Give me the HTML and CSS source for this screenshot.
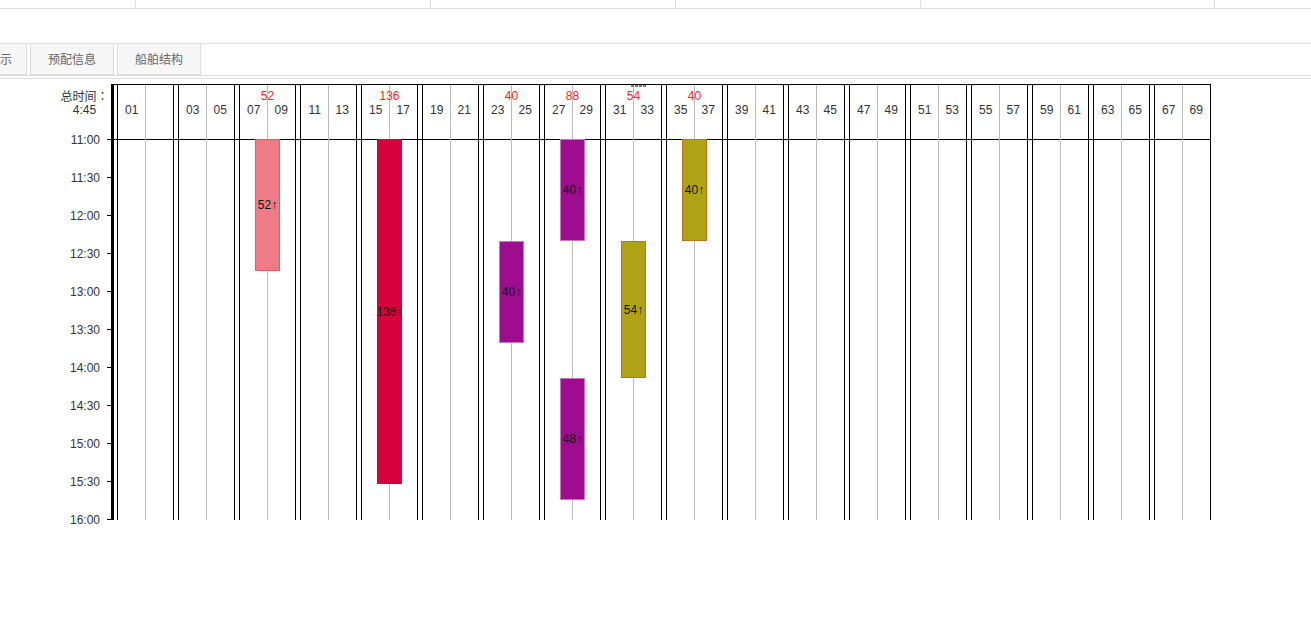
FILE: index.html
```
<!DOCTYPE html>
<html lang="zh-CN">
<head>
<meta charset="utf-8">
<title>船舶作业计划</title>
<link rel="stylesheet" href="styles.css">
</head>
<body>
<div class="table-foot"><span></span><span></span><span></span><span></span><span></span><span></span></div>
<nav class="tabs">
<button class="tab tab-cut" type="button">示</button>
<button class="tab" type="button">预配信息</button>
<button class="tab" type="button">船舶结构</button>
</nav>
<main class="panel">
<div class="grip"><i></i><i></i><i></i><i></i></div>
<div class="chart">
<div class="axis">
<div class="total"><span>总时间<span class="colon" lang="zh-TW">：</span></span><span>4:45</span></div>
<ol class="times" id="times"></ol>
</div>
<div class="bays" id="bays"></div>
</div>
</main>
<script src="chart.js"></script>
</body>
</html>
```
FILE: styles.css
```
* {
  box-sizing: border-box;
}

body {
  margin: 0;
  background: #fff;
  color: #333;
  font: 12px/14px "Liberation Sans", "Noto Sans CJK SC", sans-serif;
}

.table-foot {
  display: grid;
  grid-template-columns: 136px 295px 245px 245px 294px 1fr;
  height: 9px;
  border-bottom: 1px solid #ddd;
}

.table-foot span {
  border-right: 1px solid #ddd;
}

.table-foot span:last-child {
  border-right: 0;
}

.tabs {
  display: flex;
  gap: 3px;
  margin-top: 34px;
  border-top: 1px solid #ddd;
  border-bottom: 1px solid #ddd;
}

.tab {
  height: 31px;
  width: 84px;
  padding: 2px 0 0;
  border: 1px solid #ddd;
  border-top: 0;
  background: #f7f7f7;
  color: #666;
  font: inherit;
}

.tab-cut {
  width: 27px;
  padding-right: 18px;
  border-left: 0;
}

.panel {
  position: relative;
  margin-top: 2px;
  padding: 5px 100px 0 0;
  border-top: 1px solid #ddd;
}

.grip {
  position: absolute;
  top: 6px;
  left: 631px;
  display: flex;
  gap: 1px;
}

.grip i {
  width: 3px;
  height: 2px;
  background: #777;
}

.chart {
  display: flex;
}

.axis {
  flex: none;
  width: 111px;
}

.total {
  display: flex;
  flex-direction: column;
  align-items: center;
  height: 48px;
  padding: 5px 0 0 58px;
  white-space: nowrap;
}

.total > span {
  height: 14px;
}

.colon {
  font-family: "Noto Sans CJK TC", sans-serif;
}

.times {
  margin: 0;
  padding: 0;
  list-style: none;
}

.times li {
  display: flex;
  justify-content: flex-end;
  align-items: center;
  gap: 7px;
  height: 15px;
  margin-bottom: 23px;
}

.times li:last-child {
  margin-bottom: 0;
}

.times li::after {
  content: "";
  width: 4px;
  height: 1px;
  background: #000;
}

.bays {
  flex: 1;
  display: grid;
  grid-template-columns: repeat(18, 1fr);
  gap: 4px;
  height: 436px;
  padding-left: 3px;
  border-top: 1px solid #000;
  border-left: 3px solid #000;
  background: linear-gradient(#000, #000) 0 54px / 100% 1px no-repeat;
}

.bay {
  border: solid #000;
  border-width: 0 1px;
  background: linear-gradient(#bbb, #bbb) center / 1px 100% no-repeat;
}

.bay-head {
  display: grid;
  grid-template-columns: 1fr 1fr;
  grid-template-rows: 14px 14px;
  height: 54px;
  padding-top: 4px;
  text-align: center;
}

.bay-total {
  grid-column: 1 / 3;
  color: #f22;
}

.bay-body {
  display: flex;
  flex-direction: column;
  align-items: center;
}

.job {
  display: flex;
  flex: none;
  align-items: center;
  justify-content: center;
  width: 25px;
  border: 1px solid;
  color: #111;
  white-space: nowrap;
}

.pink {
  background: #ef7b87;
  border-color: #ee555f;
}

.red {
  background: #d8003c;
  border-color: #d8003c;
}

.purple {
  background: #9e0c8f;
  border-color: #cb74c2;
}

.olive {
  background: #b0a216;
  border-color: #c07010;
}
```
FILE: chart.js
```
const jobs = {
  7: [{ gap: 0, size: 132, count: 52, tone: "pink" }],
  15: [{ gap: 0, size: 345, count: 136, tone: "red" }],
  23: [{ gap: 102, size: 102, count: 40, tone: "purple" }],
  27: [
    { gap: 0, size: 102, count: 40, tone: "purple" },
    { gap: 137, size: 122, count: 48, tone: "purple" }
  ],
  31: [{ gap: 102, size: 137, count: 54, tone: "olive" }],
  35: [{ gap: 0, size: 102, count: 40, tone: "olive" }]
};

const pad = (n) => String(n).padStart(2, "0");

let times = "";
for (let m = 660; m <= 960; m += 30) {
  times += `<li>${Math.floor(m / 60)}:${pad(m % 60)}</li>`;
}
document.getElementById("times").innerHTML = times;

let bays = "";
for (let i = 0; i < 18; i++) {
  const left = i === 0 ? 1 : i * 4 - 1;
  const right = i === 0 ? "" : pad(left + 2);
  const list = jobs[left] || [];
  const total = list.reduce((sum, job) => sum + job.count, 0) || "";
  const bars = list.map((job) =>
    `<div class="job ${job.tone}" style="margin-top:${job.gap}px;height:${job.size}px"><span>${job.count}↑</span></div>`
  ).join("");
  bays += `<section class="bay"><div class="bay-head"><span class="bay-total">${total}</span><span>${pad(left)}</span><span>${right}</span></div><div class="bay-body">${bars}</div></section>`;
}
document.getElementById("bays").innerHTML = bays;
```
